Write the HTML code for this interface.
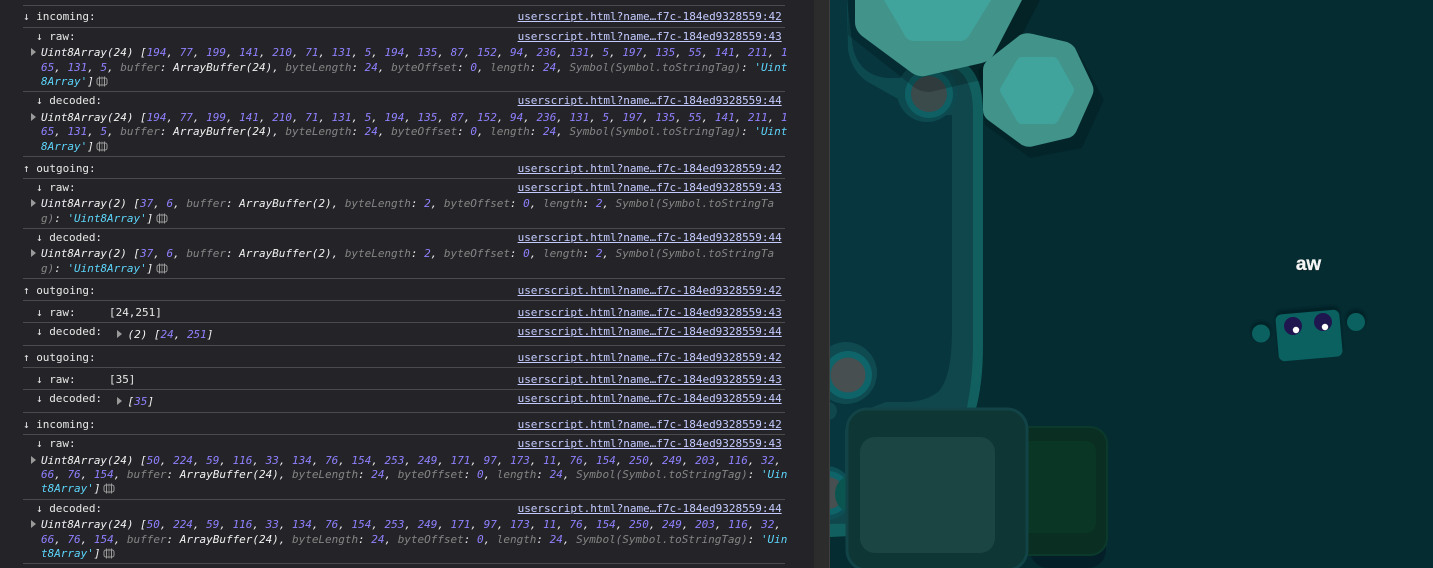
<!DOCTYPE html>
<html>
<head>
<meta charset="utf-8">
<style>
html,body{margin:0;padding:0;width:1433px;height:568px;overflow:hidden;background:#242428}
#con{position:absolute;left:0;top:0;width:814px;height:568px;background:#242428;overflow:hidden;font-family:"DejaVu Sans Mono","Liberation Mono",monospace;font-size:11px;letter-spacing:-.02px;color:#e8e8e8}
#sb{position:absolute;left:814px;top:0;width:15px;height:568px;background:#2c2c2c}
#sp{position:absolute;left:829px;top:0;width:1px;height:568px;background:#3f3f3f}
.l{position:absolute;left:23px;width:762px;height:1px;background:#4b4b4e}
.t{position:absolute;height:14px;line-height:14px;white-space:pre;margin-top:1px}
.a{left:517.6px;color:#c4cbff;text-decoration:underline}
.o{left:41px;width:746px;overflow:hidden;font-style:italic}
.n{color:#8f80ff}.k{color:#858585}.s{color:#5cd5fb}.w{color:#f2f2f2}
.tr{position:absolute;width:0;height:0;border-left:5px solid #9a9a9a;border-top:4px solid transparent;border-bottom:4px solid transparent}
.ic{position:absolute;width:12px;height:11px}
svg#g{position:absolute;left:830px;top:0}
</style>
</head>
<body>
<div id="con">
<div class="l" style="top:5px"></div><div class="l" style="top:27px"></div><div class="l" style="top:91px"></div><div class="l" style="top:156px"></div><div class="l" style="top:178px"></div><div class="l" style="top:228px"></div><div class="l" style="top:278px"></div><div class="l" style="top:300px"></div><div class="l" style="top:322px"></div><div class="l" style="top:345px"></div><div class="l" style="top:367px"></div><div class="l" style="top:389px"></div><div class="l" style="top:412px"></div><div class="l" style="top:434px"></div><div class="l" style="top:499px"></div><div class="l" style="top:563px"></div>

<div class="t" style="left:23px;top:9px">↓ incoming:</div><div class="t a" style="top:9px">userscript.html?name…f7c-184ed9328559:42</div>
<div class="t" style="left:36px;top:29px">↓ raw:</div><div class="t a" style="top:29px">userscript.html?name…f7c-184ed9328559:43</div>
<div class="tr" style="left:31px;top:48px"></div>
<div class="t o" style="top:45px"><span class="w">Uint8Array(24) [</span><span class="n">194</span>, <span class="n">77</span>, <span class="n">199</span>, <span class="n">141</span>, <span class="n">210</span>, <span class="n">71</span>, <span class="n">131</span>, <span class="n">5</span>, <span class="n">194</span>, <span class="n">135</span>, <span class="n">87</span>, <span class="n">152</span>, <span class="n">94</span>, <span class="n">236</span>, <span class="n">131</span>, <span class="n">5</span>, <span class="n">197</span>, <span class="n">135</span>, <span class="n">55</span>, <span class="n">141</span>, <span class="n">211</span>, <span class="n">1</span></div>
<div class="t o" style="top:60px"><span class="n">65</span>, <span class="n">131</span>, <span class="n">5</span>, <span class="k">buffer</span>: <span class="w">ArrayBuffer(24)</span>, <span class="k">byteLength</span>: <span class="n">24</span>, <span class="k">byteOffset</span>: <span class="n">0</span>, <span class="k">length</span>: <span class="n">24</span>, <span class="k">Symbol(Symbol.toStringTag)</span>: <span class="s">'Uint</span></div>
<div class="t o" style="top:74px"><span class="s">8Array'</span><span class="w">]</span></div>
<svg class="ic" style="left:96px;top:76px" viewBox="0 0 12 11"><rect x="1" y="2" width="10" height="7" rx="2" fill="none" stroke="#9a9a9a"/><path d="M3.500 .5v10M8.500 .5v10" stroke="#9a9a9a"/><path d="M6 .5v10" stroke="#9a9a9a" stroke-width=".6"/></svg>

<div class="t" style="left:36px;top:93px">↓ decoded:</div><div class="t a" style="top:93px">userscript.html?name…f7c-184ed9328559:44</div>
<div class="tr" style="left:31px;top:113px"></div>
<div class="t o" style="top:110px"><span class="w">Uint8Array(24) [</span><span class="n">194</span>, <span class="n">77</span>, <span class="n">199</span>, <span class="n">141</span>, <span class="n">210</span>, <span class="n">71</span>, <span class="n">131</span>, <span class="n">5</span>, <span class="n">194</span>, <span class="n">135</span>, <span class="n">87</span>, <span class="n">152</span>, <span class="n">94</span>, <span class="n">236</span>, <span class="n">131</span>, <span class="n">5</span>, <span class="n">197</span>, <span class="n">135</span>, <span class="n">55</span>, <span class="n">141</span>, <span class="n">211</span>, <span class="n">1</span></div>
<div class="t o" style="top:124px"><span class="n">65</span>, <span class="n">131</span>, <span class="n">5</span>, <span class="k">buffer</span>: <span class="w">ArrayBuffer(24)</span>, <span class="k">byteLength</span>: <span class="n">24</span>, <span class="k">byteOffset</span>: <span class="n">0</span>, <span class="k">length</span>: <span class="n">24</span>, <span class="k">Symbol(Symbol.toStringTag)</span>: <span class="s">'Uint</span></div>
<div class="t o" style="top:139px"><span class="s">8Array'</span><span class="w">]</span></div>
<svg class="ic" style="left:96px;top:141px" viewBox="0 0 12 11"><rect x="1" y="2" width="10" height="7" rx="2" fill="none" stroke="#9a9a9a"/><path d="M3.500 .5v10M8.500 .5v10" stroke="#9a9a9a"/><path d="M6 .5v10" stroke="#9a9a9a" stroke-width=".6"/></svg>

<div class="t" style="left:23px;top:161px">↑ outgoing:</div><div class="t a" style="top:161px">userscript.html?name…f7c-184ed9328559:42</div>
<div class="t" style="left:36px;top:180px">↓ raw:</div><div class="t a" style="top:180px">userscript.html?name…f7c-184ed9328559:43</div>
<div class="tr" style="left:31px;top:199px"></div>
<div class="t o" style="top:196px"><span class="w">Uint8Array(2) [</span><span class="n">37</span>, <span class="n">6</span>, <span class="k">buffer</span>: <span class="w">ArrayBuffer(2)</span>, <span class="k">byteLength</span>: <span class="n">2</span>, <span class="k">byteOffset</span>: <span class="n">0</span>, <span class="k">length</span>: <span class="n">2</span>, <span class="k">Symbol(Symbol.toStringTa</span></div>
<div class="t o" style="top:211px"><span class="k">g)</span>: <span class="s">'Uint8Array'</span><span class="w">]</span></div>
<svg class="ic" style="left:156px;top:213px" viewBox="0 0 12 11"><rect x="1" y="2" width="10" height="7" rx="2" fill="none" stroke="#9a9a9a"/><path d="M3.500 .5v10M8.500 .5v10" stroke="#9a9a9a"/><path d="M6 .5v10" stroke="#9a9a9a" stroke-width=".6"/></svg>

<div class="t" style="left:36px;top:230px">↓ decoded:</div><div class="t a" style="top:230px">userscript.html?name…f7c-184ed9328559:44</div>
<div class="tr" style="left:31px;top:249px"></div>
<div class="t o" style="top:246px"><span class="w">Uint8Array(2) [</span><span class="n">37</span>, <span class="n">6</span>, <span class="k">buffer</span>: <span class="w">ArrayBuffer(2)</span>, <span class="k">byteLength</span>: <span class="n">2</span>, <span class="k">byteOffset</span>: <span class="n">0</span>, <span class="k">length</span>: <span class="n">2</span>, <span class="k">Symbol(Symbol.toStringTa</span></div>
<div class="t o" style="top:261px"><span class="k">g)</span>: <span class="s">'Uint8Array'</span><span class="w">]</span></div>
<svg class="ic" style="left:156px;top:263px" viewBox="0 0 12 11"><rect x="1" y="2" width="10" height="7" rx="2" fill="none" stroke="#9a9a9a"/><path d="M3.500 .5v10M8.500 .5v10" stroke="#9a9a9a"/><path d="M6 .5v10" stroke="#9a9a9a" stroke-width=".6"/></svg>

<div class="t" style="left:23px;top:283px">↑ outgoing:</div><div class="t a" style="top:283px">userscript.html?name…f7c-184ed9328559:42</div>
<div class="t" style="left:36px;top:305px">↓ raw:</div><div class="t" style="left:109px;top:305px">[24,251]</div><div class="t a" style="top:305px">userscript.html?name…f7c-184ed9328559:43</div>
<div class="t" style="left:36px;top:324px">↓ decoded:</div><div class="t a" style="top:324px">userscript.html?name…f7c-184ed9328559:44</div>
<div class="tr" style="left:117px;top:330px"></div>
<div class="t" style="left:127.5px;top:327px;font-style:italic"><span class="w">(2) [</span><span class="n">24</span>, <span class="n">251</span><span class="w">]</span></div>

<div class="t" style="left:23px;top:350px">↑ outgoing:</div><div class="t a" style="top:350px">userscript.html?name…f7c-184ed9328559:42</div>
<div class="t" style="left:36px;top:372px">↓ raw:</div><div class="t" style="left:109px;top:372px">[35]</div><div class="t a" style="top:372px">userscript.html?name…f7c-184ed9328559:43</div>
<div class="t" style="left:36px;top:391px">↓ decoded:</div><div class="t a" style="top:391px">userscript.html?name…f7c-184ed9328559:44</div>
<div class="tr" style="left:117px;top:397px"></div>
<div class="t" style="left:127.5px;top:394px;font-style:italic"><span class="w">[</span><span class="n">35</span><span class="w">]</span></div>

<div class="t" style="left:23px;top:417px">↓ incoming:</div><div class="t a" style="top:417px">userscript.html?name…f7c-184ed9328559:42</div>
<div class="t" style="left:36px;top:436px">↓ raw:</div><div class="t a" style="top:436px">userscript.html?name…f7c-184ed9328559:43</div>
<div class="tr" style="left:31px;top:456px"></div>
<div class="t o" style="top:453px"><span class="w">Uint8Array(24) [</span><span class="n">50</span>, <span class="n">224</span>, <span class="n">59</span>, <span class="n">116</span>, <span class="n">33</span>, <span class="n">134</span>, <span class="n">76</span>, <span class="n">154</span>, <span class="n">253</span>, <span class="n">249</span>, <span class="n">171</span>, <span class="n">97</span>, <span class="n">173</span>, <span class="n">11</span>, <span class="n">76</span>, <span class="n">154</span>, <span class="n">250</span>, <span class="n">249</span>, <span class="n">203</span>, <span class="n">116</span>, <span class="n">32</span>,</div>
<div class="t o" style="top:467px"><span class="n">66</span>, <span class="n">76</span>, <span class="n">154</span>, <span class="k">buffer</span>: <span class="w">ArrayBuffer(24)</span>, <span class="k">byteLength</span>: <span class="n">24</span>, <span class="k">byteOffset</span>: <span class="n">0</span>, <span class="k">length</span>: <span class="n">24</span>, <span class="k">Symbol(Symbol.toStringTag)</span>: <span class="s">'Uin</span></div>
<div class="t o" style="top:481px"><span class="s">t8Array'</span><span class="w">]</span></div>
<svg class="ic" style="left:103px;top:483px" viewBox="0 0 12 11"><rect x="1" y="2" width="10" height="7" rx="2" fill="none" stroke="#9a9a9a"/><path d="M3.500 .5v10M8.500 .5v10" stroke="#9a9a9a"/><path d="M6 .5v10" stroke="#9a9a9a" stroke-width=".6"/></svg>

<div class="t" style="left:36px;top:501px">↓ decoded:</div><div class="t a" style="top:501px">userscript.html?name…f7c-184ed9328559:44</div>
<div class="tr" style="left:31px;top:520px"></div>
<div class="t o" style="top:517px"><span class="w">Uint8Array(24) [</span><span class="n">50</span>, <span class="n">224</span>, <span class="n">59</span>, <span class="n">116</span>, <span class="n">33</span>, <span class="n">134</span>, <span class="n">76</span>, <span class="n">154</span>, <span class="n">253</span>, <span class="n">249</span>, <span class="n">171</span>, <span class="n">97</span>, <span class="n">173</span>, <span class="n">11</span>, <span class="n">76</span>, <span class="n">154</span>, <span class="n">250</span>, <span class="n">249</span>, <span class="n">203</span>, <span class="n">116</span>, <span class="n">32</span>,</div>
<div class="t o" style="top:532px"><span class="n">66</span>, <span class="n">76</span>, <span class="n">154</span>, <span class="k">buffer</span>: <span class="w">ArrayBuffer(24)</span>, <span class="k">byteLength</span>: <span class="n">24</span>, <span class="k">byteOffset</span>: <span class="n">0</span>, <span class="k">length</span>: <span class="n">24</span>, <span class="k">Symbol(Symbol.toStringTag)</span>: <span class="s">'Uin</span></div>
<div class="t o" style="top:546px"><span class="s">t8Array'</span><span class="w">]</span></div>
<svg class="ic" style="left:103px;top:548px" viewBox="0 0 12 11"><rect x="1" y="2" width="10" height="7" rx="2" fill="none" stroke="#9a9a9a"/><path d="M3.500 .5v10M8.500 .5v10" stroke="#9a9a9a"/><path d="M6 .5v10" stroke="#9a9a9a" stroke-width=".6"/></svg>
</div>
<div id="sb"></div><div id="sp"></div>

<svg id="g" width="603" height="568" viewBox="830 0 603 568">
<defs><filter id="b" x="-20%" y="-20%" width="140%" height="140%"><feGaussianBlur stdDeviation="1"/></filter></defs>
<rect x="830" y="0" width="603" height="568" fill="#042c31"/>
<!-- wall -->
<path d="M830 0H960V60Q983 72 983 112V345Q983 385 975 412V530L830 537Z" fill="#11605f"/>
<path d="M830 0H955V68Q973 78 973 112V345Q973 380 966 412V522L830 524Z" fill="#10474c"/>
<path d="M830 0H945V115H952V330Q952 378 938 392Q925 402 905 402H886L860 412L845 430V505L830 510Z" fill="#07363f"/>
<path d="M847 0L852 42Q856 74 886 78L925 78V100H900L868 82Q852 72 848 50Z" fill="#0d4a50"/>
<!-- cannons -->
<circle cx="927" cy="92" r="30" fill="#0d4a50"/><circle cx="929" cy="94" r="24" fill="#0e6065"/><circle cx="929" cy="94" r="18" fill="#3b4a4b"/>
<circle cx="846" cy="373" r="31" fill="#0f4a50"/><circle cx="848" cy="375" r="24" fill="#0e6469"/><circle cx="848" cy="375" r="17.500" fill="#474f50"/>
<circle cx="828" cy="411" r="9" fill="#10474c"/>
<circle cx="826" cy="493" r="27" fill="#0d4f55"/><circle cx="828" cy="493" r="22" fill="#0e6469"/><circle cx="828" cy="493" r="16" fill="#474f50"/>
<ellipse cx="850" cy="494" rx="15" ry="18" fill="#0b5550"/>
<!-- hex shadows -->
<path d="M848 0V35L915 88Q922 92 930 92L990 78Q1003 75 1009 60L1040 0Z" fill="#000" opacity=".2"/>
<path d="M978 70L1022 40L1080 55L1104 100L1082 148L1030 158L985 125Z" fill="#000" opacity=".14"/>
<!-- small hexagon -->
<path d="M1020 35Q1026 32 1033 34L1067 42Q1072 44 1075 48L1092 84Q1095 90 1092 96L1076 132Q1073 137 1068 138L1034 146Q1028 148 1022 145L988 120Q983 116 983 110V70Q983 64 988 60Z" fill="#42948a"/>
<path d="M1022 57H1053Q1056 57 1058 60L1073 87Q1075 90 1073 93L1058 121Q1056 124 1053 124H1022Q1019 124 1017 121L1001 93Q999 90 1001 87L1017 60Q1019 57 1022 57Z" fill="#40a49d"/>
<!-- big hexagon -->
<path d="M855 0V22Q855 30 862 36L912 73Q918 77 925 76L982 63Q990 61 994 54L1022 0Z" fill="#42948a"/>
<path d="M884 0L904 34Q907 41 915 41H960Q966 41 970 34L991 0Z" fill="#40a49d"/>
<!-- squares -->
<rect x="1030" y="435" width="76" height="133" rx="18" fill="#041f28"/>
<rect x="1000" y="427" width="107" height="128" rx="17" fill="#0a2f22" stroke="#0b3a2c" stroke-width="2"/>
<path d="M1020 441H1084Q1096 441 1096 453V521Q1096 533 1084 533H1020Z" fill="#0a3625"/>
<rect x="847" y="409" width="180" height="161" rx="20" fill="#0d3634" stroke="#124346" stroke-width="3"/>
<rect x="860" y="437" width="135" height="116" rx="15" fill="#1b4542"/>
<!-- player -->
<circle cx="1261" cy="331" r="10" fill="#032227" filter="url(#b)"/><circle cx="1261" cy="333.500" r="9" fill="#0a615f"/>
<circle cx="1356" cy="319" r="10" fill="#032227" filter="url(#b)"/><circle cx="1356" cy="322" r="9" fill="#0a615f"/>
<rect x="1277" y="308" width="64" height="47" rx="6" transform="rotate(-5 1309 331)" fill="#032227" filter="url(#b)"/>
<rect x="1277" y="312" width="64" height="47" rx="6" transform="rotate(-5 1309 335)" fill="#0a615f"/>
<circle cx="1293" cy="326" r="9" fill="#1f1650"/><circle cx="1296" cy="330" r="3.200" fill="#fff"/>
<circle cx="1323" cy="322" r="9" fill="#1f1650"/><circle cx="1325" cy="327" r="3.200" fill="#fff"/>
<text x="1309" y="271" text-anchor="middle" font-family="Liberation Sans,sans-serif" font-weight="bold" font-size="19" fill="#000" opacity=".4">aw</text>
<text x="1308.500" y="270" text-anchor="middle" font-family="Liberation Sans,sans-serif" font-weight="bold" font-size="19" fill="#f4f4f4" stroke="#f4f4f4" stroke-width=".3">aw</text>
</svg>
</body>
</html>
